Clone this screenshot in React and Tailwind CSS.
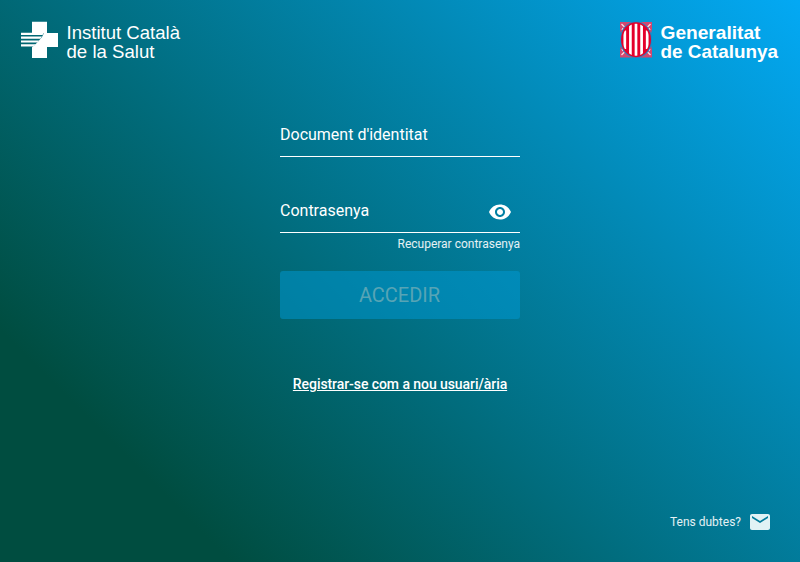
const roboto = "font-[Roboto,sans-serif]";
const helvetica = "font-['Liberation_Sans',Arial,sans-serif]";

function HealthCross() {
  return (
    <svg className="h-[37px] w-[37px] shrink-0" viewBox="0 0 37 37" fill="#fff">
      <path d="M11 .7h15V12h11v14H26v11H11V26.300l4-3.600 3-3.200 3-3.400 2-4.100H11z" />
      <path d="M0 11.800h23l-1.500 2.200H0zM0 15.600h21l-1.600 2.100H0zM0 19.400h18l-1.700 2.100H0zM0 23.200h15l-3 2.300H0z" />
    </svg>
  );
}

function Shield() {
  return (
    <svg className="h-[37px] w-[32px] shrink-0" viewBox="0 0 32 37">
      <path fill="#d2476f" d="M0 1h32v7l-1 5H1L0 8zM0 36.500h32V29l-1-5H1l-1 5z" />
      <path stroke="#fbdbe3" strokeWidth="1.300" d="M1.500 3l3 3M30.500 3l-3 3M1.500 34l3-3M30.500 34l-3-3M2 9l1-2M30 9l-1-2M2 28l1 2M30 28l-1 2" />
      <ellipse cx="16" cy="18.700" rx="16" ry="18.300" fill="#1b86c6" />
      <ellipse cx="16" cy="18.700" rx="15" ry="17.500" fill="#e4002b" />
      <clipPath id="oval"><ellipse cx="16" cy="18.700" rx="13.500" ry="16" /></clipPath>
      <path clipPath="url(#oval)" stroke="#fff" strokeWidth="2.700" d="M4.800 9.500v18.500M10.400 0v37M16 0v37M21.600 0v37M27.200 9.500v18.500" />
    </svg>
  );
}

export default function App() {
  return (
    <div className={`flex h-[562px] w-[800px] flex-col overflow-hidden bg-[linear-gradient(45deg,#004d40_17%,#03a9f4_100%)] text-white ${roboto}`}>
      <header className="flex h-[118px] shrink-0 items-start justify-between pr-[22px] pl-[21px] pt-[21px]">
        <div className="flex">
          <HealthCross />
          <svg className={`ml-[7px] h-[44px] w-[118px] overflow-visible ${helvetica}`} fill="#fff" fontSize="18.500">
            <text x="1.500" y="17.500" textLength="113.500" lengthAdjust="spacingAndGlyphs">Institut Català</text>
            <text x="1.500" y="36.500" textLength="88" lengthAdjust="spacingAndGlyphs">de la Salut</text>
          </svg>
        </div>
        <div className="flex">
          <Shield />
          <svg className={`ml-2 h-[44px] w-[118px] overflow-visible font-bold ${helvetica}`} fill="#fff" fontSize="19">
            <text x="0.500" y="18" textLength="100" lengthAdjust="spacingAndGlyphs">Generalitat</text>
            <text x="0.500" y="37" textLength="117.500" lengthAdjust="spacingAndGlyphs">de Catalunya</text>
          </svg>
        </div>
      </header>
      <main className="mx-auto flex w-60 flex-1 flex-col">
        <label className="flex h-[39px] items-start border-b border-white pt-[5px] text-base">Document d&apos;identitat</label>
        <label className="mt-[37px] flex h-[39px] items-start justify-between border-b border-white pt-[5px] text-base">
          Contrasenya
          <svg className="mt-px mr-2 h-6 w-6" viewBox="0 0 24 24" fill="#fff">
            <path d="M12 4.500C7 4.500 2.730 7.610 1 12c1.730 4.390 6 7.500 11 7.500s9.270-3.110 11-7.500c-1.730-4.390-6-7.500-11-7.500zM12 17c-2.760 0-5-2.240-5-5s2.240-5 5-5 5 2.240 5 5-2.240 5-5 5zm0-8c-1.660 0-3 1.340-3 3s1.340 3 3 3 3-1.340 3-3-1.340-3-3-3z" />
          </svg>
        </label>
        <a className="mt-[3px] text-right text-xs leading-4 text-white/90">Recuperar contrasenya</a>
        <button className="mt-[19px] h-12 shrink-0 rounded-[3px] bg-[#0099d6]/50 pr-px text-xl text-[#57a4b5]">ACCEDIR</button>
        <a className="mt-[55px] text-center text-sm leading-5 font-medium tracking-[-0.07px] underline">Registrar-se com a nou usuari/ària</a>
      </main>
      <footer className="flex h-20 items-center justify-end gap-[7px] pr-7 text-xs text-white/90">
        <span>Tens dubtes?</span>
        <svg className="h-6 w-6" viewBox="0 0 24 24" fill="#e1f2f5">
          <path d="M20 4H4c-1.100 0-1.990.9-1.990 2L2 18c0 1.100.9 2 2 2h16c1.100 0 2-.9 2-2V6c0-1.100-.9-2-2-2zm0 4l-8 5-8-5V6l8 5 8-5v2z" />
        </svg>
      </footer>
    </div>
  );
}
